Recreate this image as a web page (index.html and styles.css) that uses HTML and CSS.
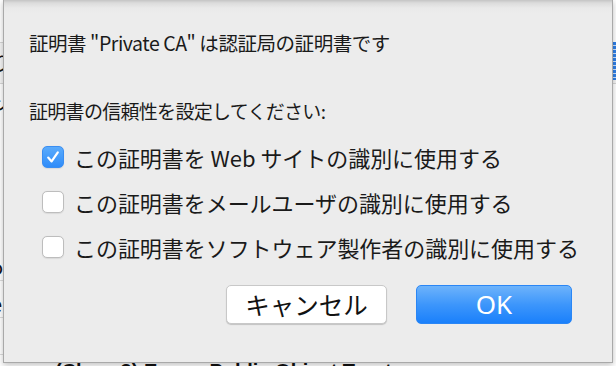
FILE: index.html
```html
<!DOCTYPE html>
<html lang="ja">
<head>
<meta charset="utf-8">
<link rel="stylesheet" href="styles.css">
</head>
<body>
<div class="backdrop">
  <div class="bg-row bg-row-sel"><span class="frag">り</span></div>
  <div class="bg-row"><span class="frag">ン</span></div>
  <div class="bg-lower">
    <span class="frag">o</span>
    <span class="frag">e</span>
    <span class="frag">t</span>
  </div>
  <div class="bg-bottom">(Class 3) Expr... Public Object Trust</div>
  <div class="bg-blue"></div>
</div>

<div class="sheet">
  <p class="title">証明書 "Private CA" は認証局の証明書です</p>
  <p class="prompt">証明書の信頼性を設定してください:</p>
  <ul class="options">
    <li class="option"><span class="box checked"><svg viewBox="0 0 22 22" width="22" height="22"><path d="M6.2 11.6 L9.6 15.4 L15.8 6.4" fill="none" stroke="#fff" stroke-width="2.2" stroke-linecap="round" stroke-linejoin="round"/></svg></span><span class="label">この証明書を Web サイトの識別に使用する</span></li>
    <li class="option"><span class="box"></span><span class="label">この証明書をメールユーザの識別に使用する</span></li>
    <li class="option"><span class="box"></span><span class="label">この証明書をソフトウェア製作者の識別に使用する</span></li>
  </ul>
  <div class="buttons">
    <button class="btn btn-cancel">キャンセル</button>
    <button class="btn btn-ok">OK</button>
  </div>
</div>
</body>
</html>
```

FILE: styles.css
```css
* { box-sizing: border-box; }
html, body {
  margin: 0;
  padding: 0;
  width: 616px;
  height: 366px;
  overflow: hidden;
  background: #ffffff;
  font-family: "Noto Sans CJK JP", "Noto Sans", sans-serif;
  color: #1a1a1a;
}

.backdrop {
  position: relative;
  width: 616px;
  height: 366px;
  padding-top: 42px;
}
.bg-row {
  height: 41px;
  border-top: 1px solid #d6d6d6;
  font-size: 20px;
  line-height: 40px;
}
.bg-row-sel {
  background: #f4f4f4;
}
.frag {
  display: block;
  margin-left: -9px;
  font-size: 20px;
  color: #111;
}
.bg-lower {
  position: absolute;
  left: 0;
  top: 254px;
  display: flex;
  flex-direction: column;
  gap: 10px;
  line-height: 26px;
}
.bg-lower .frag { border-bottom: 1px solid #dcdcdc; }
.bg-bottom {
  position: absolute;
  left: 55px;
  top: 360px;
  font-family: "Liberation Sans", sans-serif;
  font-size: 20px;
  font-weight: bold;
  color: #111;
  white-space: nowrap;
}
.bg-blue {
  position: absolute;
  right: 0;
  top: 42px;
  width: 4px;
  height: 38px;
  background: repeating-linear-gradient(180deg, #2f7fe6 0 3px, #cfe2fb 3px 4px);
}

.sheet {
  position: absolute;
  left: 3px;
  top: 0;
  width: 610px;
  height: 363px;
  background: linear-gradient(180deg, #c4c4c4 0px, #dcdcdc 3px, #e9e9e9 8px, #ececec 14px);
  border: 1px solid #a9a9a9;
  border-top: none;
  padding: 30px 40px 0 25px;
  display: flex;
  flex-direction: column;
  box-shadow: 0 2px 6px rgba(0,0,0,0.25);
}

.title, .prompt {
  margin: 0;
  font-size: 19.5px;
  line-height: 26px;
  white-space: nowrap;
}
.title { letter-spacing: -0.45px; }
.prompt {
  margin-top: 42px;
  font-size: 19px;
  letter-spacing: -0.7px;
}

.options {
  list-style: none;
  margin: 10px 0 0 0;
  padding: 0;
}
.option {
  height: 45px;
  display: flex;
  align-items: center;
  padding-left: 13px;
}
.box {
  width: 22px;
  height: 22px;
  border-radius: 5px;
  background: #ffffff;
  border: 1px solid #bdbdbd;
  box-shadow: 0 0.5px 1px rgba(0,0,0,0.08);
  flex: none;
  display: flex;
}
.box.checked {
  background: linear-gradient(180deg, #5aabfc, #2f8cf9);
  border-color: #3a8ef2;
}
.box svg { margin: -1px; }
.label {
  margin-left: 10px;
  font-size: 22px;
  line-height: 28px;
  white-space: nowrap;
  letter-spacing: -0.05px;
}

.buttons {
  margin-top: 16px;
  display: flex;
  justify-content: flex-end;
  gap: 29px;
}
.btn {
  height: 39px;
  border-radius: 5px;
  font-family: "Noto Sans CJK JP", "Noto Sans", sans-serif;
  font-size: 24.5px;
  line-height: 37px;
  padding: 0;
  cursor: default;
}
.btn-cancel {
  width: 161px;
  background: #ffffff;
  color: #111;
  border: 1px solid #c8c8c8;
  box-shadow: 0 1px 1px rgba(0,0,0,0.18);
}
.btn-ok {
  width: 156px;
  background: linear-gradient(180deg, #6db3fb 0%, #3d96fb 50%, #1a80fb 100%);
  color: #ffffff;
  border: 1px solid #2a86f5;
  font-family: "Noto Sans", "Noto Sans CJK JP", sans-serif;
  font-size: 26px;
}
```
